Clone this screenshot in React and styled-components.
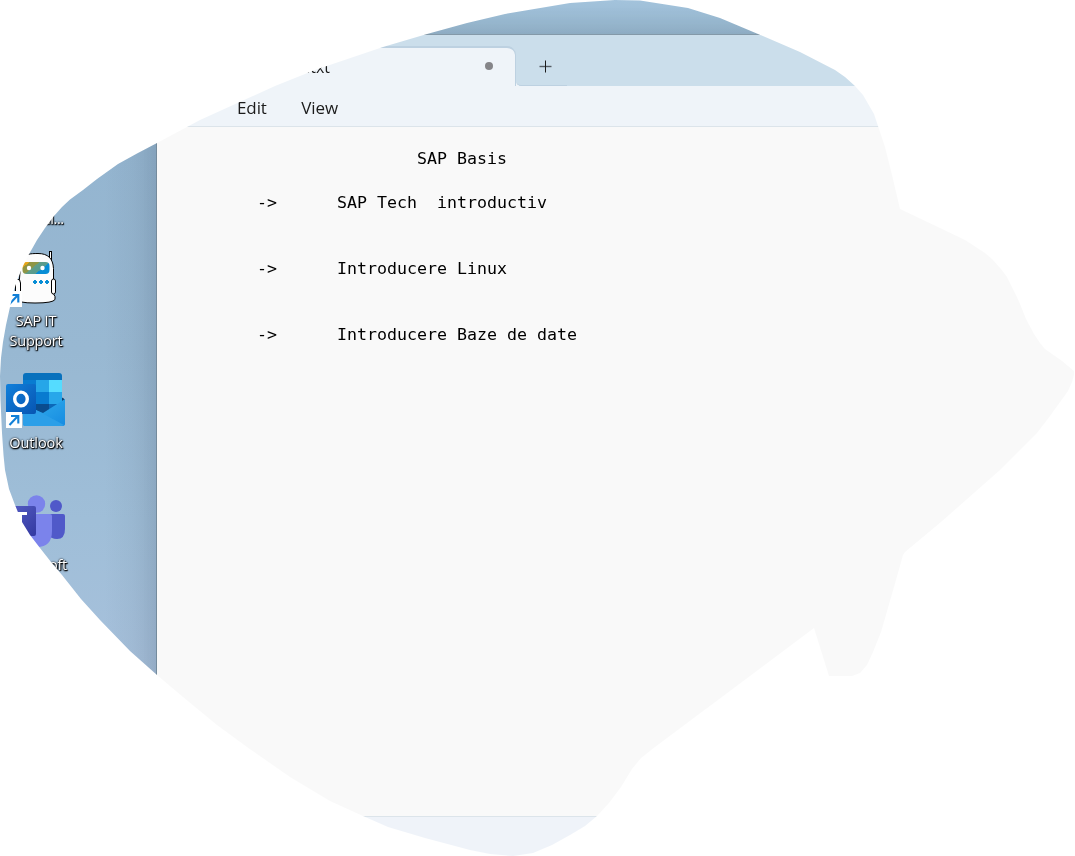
import React from 'react';
import styled, { createGlobalStyle } from 'styled-components';

const Global = createGlobalStyle`
  html, body { margin: 0; background: #fff; overflow: hidden; }
  * { box-sizing: border-box; }
`;

const outline = [
  [200, 120], [157, 143], [137, 153.5], [118, 164], [97, 179], [83, 190], [70, 199.5], [62, 207], [54, 216], [45, 228], [37, 240],
  [28, 256], [22, 268], [17, 281], [13, 293], [10, 307], [6, 325], [3, 342],
  [1, 358], [0, 376], [0.5, 400], [2, 433], [3.5, 455], [5, 470], [9, 489], [15, 505], [22, 522], [30, 535], [40, 548], [51, 562],
  [62, 575], [81, 599], [100, 620],
  [130, 651], [157, 675], [183, 697], [217, 725], [247, 747], [290, 777], [330, 801], [363, 816], [388, 827], [425, 838],
  [470, 850], [490, 854], [513, 856], [533, 853], [552, 845], [570, 835], [585, 826], [597, 816], [609, 803], [621, 787],
  [632, 769], [641, 758], [655, 747], [814, 628], [829, 676], [852, 676], [860, 673], [867, 665], [873, 652], [881, 632],
  [894, 587], [903, 555], [905, 552], [941, 522], [1000, 470], [1037, 433], [1050, 416], [1068, 391], [1072, 382],
  [1074, 375], [1074, 371], [1062, 361], [1045, 349], [1040, 343], [1034, 334], [1026, 319], [1020, 304], [1016, 295],
  [1007, 277], [1001, 269], [992, 259], [985, 253], [965, 240], [940, 228], [900, 209], [892, 175], [885, 147],
  [878, 126], [874, 114], [863, 95], [855, 86], [845, 77], [835, 70], [800, 52], [758, 34], [720, 18], [688, 8], [640, 0.5],
  [615, 0], [570, 3], [505, 14], [467, 23], [427, 34], [383, 47], [315, 70], [275, 86],
].map(([x, y]) => `${x}px ${y}px`).join(', ');

const Silhouette = styled.div`
  width: 1075px;
  height: 856px;
  overflow: hidden;
  clip-path: polygon(${outline});
`;

const Desktop = styled.main`
  display: flex;
  width: 1075px;
  height: 856px;
  isolation: isolate;
  will-change: transform;
  background: linear-gradient(180deg, #a3c3dc 0, #9bbbd3 20px, #94b5d0 150px, #98b8d2 350px, #9fbed8 520px, #a8c1dc 690px);
`;

const Shortcuts = styled.nav`
  flex: 0 0 157px;
  padding-top: 209px;
  background: linear-gradient(90deg, transparent 105px, rgba(70, 85, 105, 0.06) 132px, rgba(70, 85, 105, 0.16) 156px, #778d9f 156px);
`;

const Shortcut = styled.div`
  width: 72px;
  height: ${(p) => p.$height}px;
  display: flex;
  flex-direction: column;
  align-items: center;
`;

const Art = styled.svg`
  display: block;
  width: 72px;
  height: 62px;
  flex: none;
`;

const Label = styled.span`
  font: 14.5px/20px 'Open Sans', 'Noto Sans', sans-serif;
  letter-spacing: ${(p) => p.$spacing ?? -0.2}px;
  color: #fff;
  text-align: center;
  white-space: pre;
  text-shadow: 1px 1px 1px #000, 0 1px 2px #000, 0 0 2px #111;
`;

const EditorWindow = styled.section`
  flex: 1;
  margin-top: 34px;
  display: flex;
  flex-direction: column;
  background: #f9f9f9;
  border-top: 1px solid #8499a8;
  box-shadow: 12px -1px 22px rgba(70, 85, 95, 0.26);
`;

const TabStrip = styled.header`
  height: 51px;
  display: flex;
  align-items: flex-end;
  background: linear-gradient(90deg, #eff4f9 362px, #cbdeeb 362px) 0 100% / 100% 8px no-repeat #cbdeeb;
`;

const Tab = styled.div`
  width: 359px;
  height: 40px;
  display: flex;
  align-items: center;
  justify-content: space-between;
  padding: 0 22px 0 149px;
  border-top: 2px solid #bdd1e1;
  border-right: 1px solid #bdd1e1;
  border-radius: 0 9px 0 0;
  background: #eff4f9;
  font: 16px/20px 'Open Sans', 'Noto Sans', sans-serif;
  color: #1b1b1b;
`;

const Dirty = styled.i`
  width: 8px;
  height: 8px;
  margin-top: -2px;
  border-radius: 50%;
  background: #858589;
`;

const AddTab = styled.div`
  width: 51px;
  height: 39px;
  display: flex;
  padding: 13px 0 0 23px;
  border-bottom: 1px solid #bdd1e1;
  border-radius: 0 0 0 5px;
  background: #cbdeeb;
`;

const MenuBar = styled.div`
  height: 41px;
  display: flex;
  gap: 34.5px;
  padding: 9px 0 0 80px;
  border-bottom: 1px solid #dce4ea;
  background: #eff4f9;
`;

const MenuItem = styled.span`
  font: 17px/25px 'Open Sans', 'Noto Sans', sans-serif;
  letter-spacing: -0.1px;
  color: #1b1b1b;
`;

const Page = styled.pre`
  flex: 1;
  margin: 0;
  padding: 21px 0 0 20px;
  font: 16.61px/22px 'DejaVu Sans Mono', monospace;
  tab-size: 8;
  color: #000;
`;

const StatusBar = styled.footer`
  height: 40px;
  border-top: 1px solid #dce4ea;
  background: #eff3f9;
`;

const ShortcutArrow = ({ x, y }) => (
  <g transform={`translate(${x} ${y})`}>
    <rect width="16" height="16" fill="#fff" />
    <path d="M3.5 13 11.5 4.5M5 4h7.3v7.5" fill="none" stroke="#1180d8" strokeWidth="2.1" />
  </g>
);

const RobotArt = () => (
  <Art viewBox="0 -1 72 62">
    <defs>
      <linearGradient id="visor" x2="1" y2=".55">
        <stop offset=".2" stopColor="#e5a51b" />
        <stop offset=".21" stopColor="#94943f" />
        <stop offset=".48" stopColor="#8b9749" />
        <stop offset=".49" stopColor="#609d87" />
        <stop offset=".78" stopColor="#559b91" />
        <stop offset=".79" stopColor="#078dd5" />
      </linearGradient>
    </defs>
    <path d="M50.5 12V1" stroke="#000" strokeWidth="3" />
    <path d="M50.5 12V2" stroke="#fff" />
    <path d="M21 9c4-5 9-5.500 17-5.500 10 0 15 5 15.500 15v22q0 5 1.500 6v3q-2 3.500-20 3.500t-18-4q3-7 2-14z" fill="#fcfcfc" stroke="#000" />
    <rect x="51.500" y="29" width="4" height="15" rx="2" fill="#fff" stroke="#000" />
    <path d="M17 29q3.500 0 3.500 4v13h-5V29z" fill="#fff" stroke="#000" />
    <rect x="22.500" y="12" width="27" height="12" rx="4" fill="url(#visor)" />
    <circle cx="29" cy="18" r="2.200" fill="#fff" />
    <circle cx="42.500" cy="18" r="2.200" fill="#fff" />
    <path d="m33 32 2-2 2 2-2 2zm6 0 2-2 2 2-2 2zm6 0 2-2 2 2-2 2z" fill="#078dd5" stroke="#078dd5" />
    <ShortcutArrow x="6" y="41" />
  </Art>
);

const OutlookArt = () => (
  <Art viewBox="0 1 72 62">
    <defs>
      <linearGradient id="badge" x2="1" y2="1"><stop stopColor="#1180db" /><stop offset="1" stopColor="#0755b2" /></linearGradient>
      <linearGradient id="mail" x2="1" y2="1"><stop stopColor="#35b1ed" /><stop offset="1" stopColor="#168be1" /></linearGradient>
    </defs>
    <path d="M61 27q6 2 3 6H24V27z" fill="#123d6b" />
    <path d="M23 6q0-3 3-3h33q3 0 3 3v36H23z" fill="#0871bd" />
    <path d="M23 10h13v12H23z" fill="#087bd1" />
    <path d="M36 10h13v12H36z" fill="#26a6e8" />
    <path d="M49 10h13v12H49z" fill="#55dcff" />
    <path d="M23 22h13v20H23z" fill="#0764b7" />
    <path d="M36 22h13v12H36z" fill="#087bd0" />
    <path d="M49 22h13v12H49z" fill="#28a7ea" />
    <path d="M36 34h13v9H36z" fill="#0a4c8e" />
    <path d="M49 34h13v7H49z" fill="#0c68b8" />
    <path d="M65 29v25q0 2-3 2H25q-2 0-2-2V35l20 8z" fill="url(#mail)" />
    <path d="M23 33 64 55q-1 1-3 1H25q-2 0-2-2z" fill="#2c9fe8" />
    <rect x="6" y="14" width="30" height="30" rx="2" fill="url(#badge)" />
    <ellipse cx="21" cy="29" rx="6.300" ry="6.900" fill="none" stroke="#fff" strokeWidth="3.400" />
    <ShortcutArrow x="6" y="42" />
  </Art>
);

const TeamsArt = () => (
  <Art viewBox="0 1 72 62">
    <defs>
      <linearGradient id="tile" x2="1" y2="1"><stop stopColor="#575fc5" /><stop offset="1" stopColor="#3339a1" /></linearGradient>
    </defs>
    <circle cx="56" cy="14" r="6" fill="#5059c9" />
    <path d="M46 22h17q2 0 2 2v13q0 10-8 10-6 0-10-5z" fill="#5059c9" />
    <circle cx="36.500" cy="12" r="8.700" fill="#7b83eb" />
    <path d="M22 22h28q2 0 2 2v15q0 16-15 16-14 0-15-16z" fill="#7b83eb" />
    <rect x="6" y="14" width="30" height="30" rx="2" fill="url(#tile)" />
    <path d="M14 20h13v3h-5v14h-3V23h-5z" fill="#fff" />
  </Art>
);

const notes = [
  '\t\t\tSAP Basis', '', '\t->\tSAP Tech  introductiv', '', '',
  '\t->\tIntroducere Linux', '', '', '\t->\tIntroducere Baze de date',
].join('\n');

export default function App() {
  return (
    <>
      <Global />
      <Silhouette>
        <Desktop>
          <Shortcuts>
            <Shortcut $height={40}><Label $spacing={-0.4}>Journal...</Label></Shortcut>
            <Shortcut $height={122}><RobotArt /><Label>{'SAP IT\nSupport'}</Label></Shortcut>
            <Shortcut $height={122}><OutlookArt /><Label $spacing={-0.1}>Outlook</Label></Shortcut>
            <Shortcut $height={122}><TeamsArt /><Label>Microsoft</Label></Shortcut>
          </Shortcuts>
          <EditorWindow>
            <TabStrip>
              <Tab><span>.txt</span><Dirty /></Tab>
              <AddTab>
                <svg width="13" height="13" viewBox="0 0 13 13">
                  <path d="M.5 6.500h12" stroke="#555d64" strokeWidth="1.400" />
                  <path d="M6.500.5v12" stroke="#1b1b1b" />
                </svg>
              </AddTab>
            </TabStrip>
            <MenuBar><MenuItem>Edit</MenuItem><MenuItem>View</MenuItem></MenuBar>
            <Page>{notes}</Page>
            <StatusBar />
          </EditorWindow>
        </Desktop>
      </Silhouette>
    </>
  );
}
